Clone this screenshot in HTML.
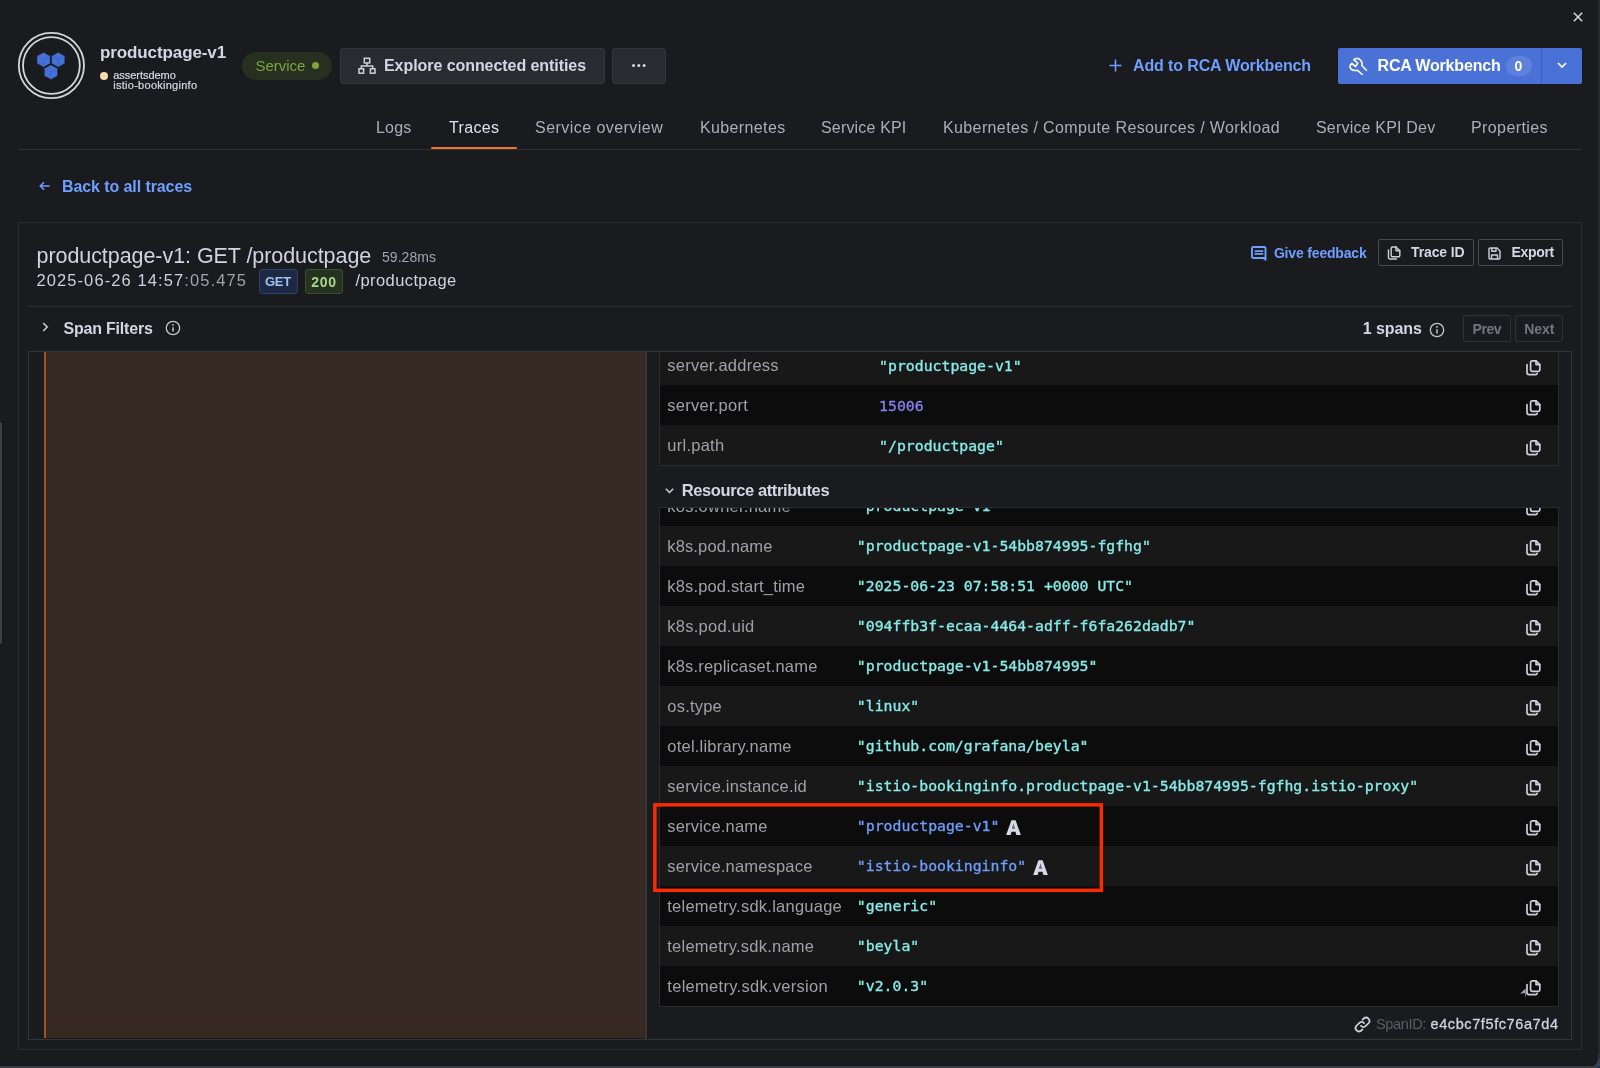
<!DOCTYPE html>
<html lang="en">
<head>
<meta charset="utf-8">
<title>productpage-v1 - Traces</title>
<style>
*{box-sizing:border-box;margin:0;padding:0}
html,body{width:1600px;height:1068px;overflow:hidden;background:#1a1b1f;}
body{position:relative;font-family:"Liberation Sans",sans-serif;color:#ccccdc;font-size:16px;}
.abs{position:absolute;white-space:nowrap;}
.t{position:absolute;white-space:nowrap;line-height:20px;}
.mono{font-family:"DejaVu Sans Mono","Liberation Mono",monospace;}
svg{position:absolute;overflow:visible}
/* header */
#tabline{left:18px;top:149px;width:1564px;height:1px;background:#2f3036;}
.tab{color:#acadb9;font-size:16px;top:118px;}
.btn{position:absolute;background:#2a2b30;border:1px solid #36373d;border-radius:3px;}
/* panel */
#panel{left:18px;top:222px;width:1564px;height:828px;border:1px solid #2b2c31;border-radius:2px;}
#inner{left:28px;top:351px;width:1544px;height:689px;border:1px solid #34353b;}
#brown{left:45px;top:352px;width:600px;height:686px;background:#362921;}
#oline{left:44px;top:352px;width:2px;height:686px;background:#9a5226;}
.row{position:absolute;left:0;width:898.5px;height:40px;}
.row.l{background:#181818}
.row.d{background:#0c0c0c}
.k{position:absolute;left:7.5px;top:10px;line-height:20px;color:#a0a0a7;font-size:16.5px;letter-spacing:.25px;white-space:nowrap}
.v{position:absolute;top:10.6px;margin-left:-1.2px;-webkit-text-stroke:0.32px;line-height:20px;font-size:14.8px;color:#86ecea;white-space:nowrap}
.cpi{position:absolute;left:866.6px;top:14.8px}
.ai{position:relative;display:inline-block;vertical-align:-4.1px;margin-left:6.6px}
.tbl{position:absolute;left:658.8px;width:900.5px;border:1px solid #2a2b2f;overflow:hidden}
</style>
<style id="ls">
#title{letter-spacing:-0.109px}
#explore{letter-spacing:-0.062px}
#addrca{letter-spacing:-0.122px}
#rca{letter-spacing:-0.173px}
#tab1{letter-spacing:0.224px}
#tab2{letter-spacing:0.331px}
#tab3{letter-spacing:0.454px}
#tab4{letter-spacing:0.376px}
#tab5{letter-spacing:0.173px}
#tab6{letter-spacing:0.377px}
#tab7{letter-spacing:0.194px}
#tab8{letter-spacing:0.408px}
#back{letter-spacing:-0.090px}
#ptitle{letter-spacing:-0.061px}
#pdur{letter-spacing:0.042px}
#pdate{letter-spacing:1.102px}
#bget{letter-spacing:-0.245px}
#b200{letter-spacing:0.714px}
#ppath{letter-spacing:0.406px}
#fb{letter-spacing:-0.172px}
#tid{letter-spacing:-0.148px}
#exp{letter-spacing:-0.307px}
#sf{letter-spacing:-0.207px}
#nsp{letter-spacing:-0.099px}
#prev{letter-spacing:-0.465px}
#next{letter-spacing:-0.040px}
#a0{letter-spacing:0.231px}
#r1{letter-spacing:0.129px}
#r2{letter-spacing:0.160px}
#r3{letter-spacing:0.254px}
#r4{letter-spacing:0.182px}
#r5{letter-spacing:0.214px}
#r6{letter-spacing:0.218px}
#r7{letter-spacing:0.209px}
#r8{letter-spacing:0.173px}
#r9{letter-spacing:0.179px}
#r10{letter-spacing:0.242px}
#r11{letter-spacing:0.233px}
#r12{letter-spacing:0.287px}
#ra{letter-spacing:-0.393px}
#sub1{letter-spacing:-0.044px}
#sub2{letter-spacing:0.265px}
#svc{letter-spacing:-0.033px}
#sid1{letter-spacing:-0.329px}
#sid2{letter-spacing:0.599px}
</style>
</head>
<body><div id="wrap" style="position:absolute;left:0;top:0;width:1600px;height:1068px;will-change:transform;">
<!-- HEADER -->
<div class="abs" id="tabline"></div>
<div id="hdr">
<!-- avatar -->
<svg style="left:17px;top:31px" width="70" height="70" viewBox="0 0 70 70">
  <circle cx="34.4" cy="34.5" r="32.6" fill="none" stroke="#d6d6d6" stroke-width="1.8"/>
  <circle cx="34.4" cy="34.5" r="28.4" fill="none" stroke="#d6d6d6" stroke-width="1.8"/>
  <g fill="#4571d8" stroke="#1a1b1f" stroke-width="0.6">
    <path d="M26.6 21.3 L33.3 25 L33.3 32.5 L26.6 36.2 L19.9 32.5 L19.9 25 Z"/>
    <path d="M41.2 21.3 L47.9 25 L47.9 32.5 L41.2 36.2 L34.5 32.5 L34.5 25 Z"/>
    <path d="M33.9 33.7 L40.6 37.4 L40.6 44.9 L33.9 48.6 L27.2 44.9 L27.2 37.4 Z"/>
  </g>
  <g fill="none" stroke="#3a62c0" stroke-width="0.7">
    <path d="M19.9 25 L26.6 28.7 L33.3 25 M26.6 28.7 L26.6 36.2"/>
    <path d="M34.5 25 L41.2 28.7 L47.9 25 M41.2 28.7 L41.2 36.2"/>
    <path d="M27.2 37.4 L33.9 41.1 L40.6 37.4 M33.9 41.1 L33.9 48.6"/>
  </g>
</svg>
<div class="t" id="title" style="left:100px;top:43.2px;font-size:17px;font-weight:bold;color:#d5d5e3;">productpage-v1</div>
<div class="abs" style="left:100px;top:71.5px;width:8px;height:8px;border-radius:50%;background:#f8d8ae;"></div>
<div class="t" id="sub1" style="left:113.3px;top:70.3px;font-size:11px;line-height:10px;color:#dadae6;-webkit-text-stroke:0.2px;">assertsdemo</div>
<div class="t" id="sub2" style="left:113.3px;top:80.3px;font-size:11px;line-height:10px;color:#dadae6;-webkit-text-stroke:0.2px;">istio-bookinginfo</div>
<!-- service pill -->
<div class="abs" style="left:242px;top:52px;width:90px;height:28px;border-radius:14px;background:#272f20;"></div>
<div class="t" id="svc" style="left:255.5px;top:55.5px;font-size:15px;color:#7fa43a;">Service</div>
<div class="abs" style="left:312px;top:62px;width:7px;height:7px;border-radius:50%;background:#7fa43a;"></div>
<!-- explore button -->
<div class="btn" style="left:340px;top:47.5px;width:265px;height:36px;"></div>
<svg style="left:358px;top:57px" width="18" height="18" viewBox="0 0 18 18" fill="none" stroke="#d0d0dc" stroke-width="1.5">
  <rect x="6.3" y="1.3" width="5.4" height="4.6"/>
  <rect x="1" y="11.8" width="4.6" height="4.4"/>
  <rect x="12.4" y="11.8" width="4.6" height="4.4"/>
  <path d="M9 6 V9 M3.3 11.8 V9 H14.7 V11.8"/>
</svg>
<div class="t" id="explore" style="left:384px;top:56px;font-size:16px;font-weight:bold;color:#d5d5e3;">Explore connected entities</div>
<div class="btn" style="left:612px;top:47.5px;width:54px;height:36px;"></div>
<div class="abs" style="left:632px;top:64px;width:3.2px;height:3.2px;border-radius:50%;background:#d5d5e3;box-shadow:5.3px 0 0 #d5d5e3,10.6px 0 0 #d5d5e3;"></div>
<!-- add to rca -->
<svg style="left:1109px;top:59px" width="13" height="13" viewBox="0 0 13 13" stroke="#6e9fff" stroke-width="1.6" fill="none"><path d="M6.5 0.5 V12.5 M0.5 6.5 H12.5"/></svg>
<div class="t" id="addrca" style="left:1133px;top:56px;font-size:16px;font-weight:bold;color:#6e9fff;">Add to RCA Workbench</div>
<!-- rca button -->
<div class="abs" style="left:1338px;top:47.5px;width:244px;height:36px;border-radius:2px;background:#4a72d6;"></div>
<div class="abs" style="left:1541px;top:47.5px;width:1px;height:36px;background:#3c60ba;"></div>
<svg style="left:1349.3px;top:56.5px" width="19" height="19" viewBox="0 0 19 19" fill="none" stroke="#fff" stroke-width="1.6" stroke-linecap="round" stroke-linejoin="round">
  <path d="M17.4 13.3 L13 8.7 C13.4 6.6 12.9 4.5 11.4 3 C9.6 1.2 6.8 1 4.7 2.7 L8.7 6 L6.6 9.5 L2.8 6.5 C0.8 8 0.4 10.4 1.9 11.9 C3.5 13.6 6 13.7 8.2 13.2 L13.3 17.5"/>
</svg>
<div class="t" id="rca" style="left:1377.5px;top:56px;font-size:16px;font-weight:bold;color:#fff;">RCA Workbench</div>
<div class="abs" style="left:1506px;top:56px;width:26px;height:20px;border-radius:10px;background:#5d81dc;"></div>
<div class="t" style="left:1514.5px;top:56px;font-size:14px;font-weight:bold;color:#fff;">0</div>
<svg style="left:1557px;top:62px" width="10" height="7" viewBox="0 0 10 7" fill="none" stroke="#fff" stroke-width="1.7"><path d="M1 1 L5 5 L9 1"/></svg>
<!-- close -->
<svg style="left:1573px;top:12px" width="10" height="10" viewBox="0 0 10 10" fill="none" stroke="#d8d8e0" stroke-width="1.5"><path d="M0.8 0.8 L9.2 9.2 M9.2 0.8 L0.8 9.2"/></svg>
<!-- tabs -->
<div class="t tab" id="tab1" style="left:376px;">Logs</div>
<div class="t tab" id="tab2" style="left:449px;color:#e0e0ec;">Traces</div>
<div class="t tab" id="tab3" style="left:535px;">Service overview</div>
<div class="t tab" id="tab4" style="left:700px;">Kubernetes</div>
<div class="t tab" id="tab5" style="left:821px;">Service KPI</div>
<div class="t tab" id="tab6" style="left:943px;">Kubernetes / Compute Resources / Workload</div>
<div class="t tab" id="tab7" style="left:1316px;">Service KPI Dev</div>
<div class="t tab" id="tab8" style="left:1471px;">Properties</div>
<div class="abs" style="left:431px;top:147px;width:86px;height:2px;background:#f0743a;border-radius:1px;"></div>
<!-- back -->
<svg style="left:38.5px;top:181.3px" width="11" height="10" viewBox="0 0 11 10" fill="none" stroke="#6e9fff" stroke-width="1.5"><path d="M10.5 5 H1.5 M5 1.2 L1.3 5 L5 8.8"/></svg>
<div class="t" id="back" style="left:62px;top:176.8px;font-size:16px;font-weight:bold;color:#6e9fff;">Back to all traces</div>
<!-- left scroll handle -->
<div class="abs" style="left:0;top:422px;width:2px;height:222px;background:#3e3f45;border-radius:0 2px 2px 0;"></div>
<div class="abs" style="left:0;top:1066px;width:1600px;height:2px;background:#3a3b40;"></div>
</div>
<!-- PANEL -->
<div class="abs" id="panel"></div>
<div id="phead">
<div class="t" id="ptitle" style="left:36.5px;top:243.5px;font-size:21.5px;line-height:24px;color:#d2d2e0;">productpage-v1: GET /productpage</div>
<div class="t" id="pdur" style="left:382px;top:247px;font-size:14px;color:#a4a5b0;">59.28ms</div>
<div class="t" id="pdate" style="left:36.4px;top:270px;font-size:16.5px;color:#cfcfdc;">2025-06-26 14:57<span style="color:#a0a1ab">:05.475</span></div>
<div class="abs" style="left:259px;top:269px;width:39px;height:25px;border-radius:3px;background:#1d2942;border:1px solid #2c426e;"></div>
<div class="t" id="bget" style="left:265px;top:271.5px;font-size:13px;font-weight:bold;color:#a3c0f5;">GET</div>
<div class="abs" style="left:305px;top:269px;width:38px;height:25px;border-radius:3px;background:#25321f;border:1px solid #39502e;"></div>
<div class="t" id="b200" style="left:311.3px;top:271.5px;font-size:14px;font-weight:bold;color:#a6d78a;">200</div>
<div class="t" id="ppath" style="left:355.5px;top:270px;font-size:16.5px;color:#d2d2e0;">/productpage</div>
<div class="abs" style="left:28px;top:306px;width:1544px;height:1px;background:#2c2d32;"></div>
<!-- right buttons -->
<svg style="left:1250.5px;top:246px" width="16" height="16" viewBox="0 0 16 16" fill="none" stroke="#6e9fff" stroke-width="1.9" stroke-linejoin="round">
  <path d="M2.2 1 H13.3 A1.2 1.2 0 0 1 14.5 2.2 V12 H2.2 A1.2 1.2 0 0 1 1 10.8 V2.2 A1.2 1.2 0 0 1 2.2 1 Z"/>
  <path d="M11.2 12 L14.9 14.4 V12 Z" fill="#6e9fff" stroke-width="1"/>
  <path d="M3.6 5.1 H12.2 M3.6 7.9 H12.2" stroke-width="1.6"/>
</svg>
<div class="t" id="fb" style="left:1273.9px;top:242.8px;font-size:14px;font-weight:bold;color:#6e9fff;">Give feedback</div>
<div class="abs" style="left:1378px;top:239.3px;width:96px;height:27px;border:1px solid #494a51;border-radius:2px;"></div>
<svg class="cp" style="left:1387.2px;top:246px" width="14" height="14" viewBox="0 0 14 14" fill="none" stroke="#d0d0dc" stroke-width="1.4" stroke-linejoin="round" stroke-linecap="round">
  <path d="M4.2 2.2 A1.2 1.2 0 0 1 5.4 1 H9 L12.8 4.8 V9.6 A1.2 1.2 0 0 1 11.6 10.8 H5.4 A1.2 1.2 0 0 1 4.2 9.6 Z"/><path d="M9 1 V4.8 H12.8"/><path d="M1.5 4 V11.6 A1.4 1.4 0 0 0 2.9 13 H9.5"/>
</svg>
<div class="t" id="tid" style="left:1411.1px;top:241.5px;font-size:14px;font-weight:bold;color:#d5d5e3;">Trace ID</div>
<div class="abs" style="left:1478px;top:239.3px;width:85px;height:27px;border:1px solid #494a51;border-radius:2px;"></div>
<svg style="left:1488.2px;top:246.5px" width="13" height="13" viewBox="0 0 13 13" fill="none" stroke="#d0d0dc" stroke-width="1.4" stroke-linejoin="round">
  <path d="M1 2 A1 1 0 0 1 2 1 H9 L12 4 V11 A1 1 0 0 1 11 12 H2 A1 1 0 0 1 1 11 Z"/><path d="M3.8 1 V4.2 H8 V1 M3.5 12 V8 H9.5 V12"/>
</svg>
<div class="t" id="exp" style="left:1511.4px;top:241.5px;font-size:14px;font-weight:bold;color:#d5d5e3;">Export</div>
<!-- span filters row -->
<svg style="left:42px;top:322px" width="7" height="10" viewBox="0 0 7 10" fill="none" stroke="#d0d0dc" stroke-width="1.5"><path d="M1.2 1 L5.2 5 L1.2 9"/></svg>
<div class="t" id="sf" style="left:63.5px;top:318.8px;font-size:16px;font-weight:bold;color:#d5d5e3;">Span Filters</div>
<svg style="left:164.8px;top:320px" width="16" height="16" viewBox="0 0 16 16" fill="none" stroke="#c4c4cf" stroke-width="1.3"><circle cx="8" cy="8" r="6.7"/><path d="M8 7.2 V11.4" stroke-width="1.5"/><circle cx="8" cy="4.9" r="0.9" fill="#c4c4cf" stroke="none"/></svg>
<div class="t" id="nsp" style="left:1362.8px;top:319.2px;font-size:16px;font-weight:bold;color:#d5d5e3;">1 spans</div>
<svg style="left:1428.6px;top:321.7px" width="16" height="16" viewBox="0 0 16 16" fill="none" stroke="#c4c4cf" stroke-width="1.3"><circle cx="8" cy="8" r="6.7"/><path d="M8 7.2 V11.4" stroke-width="1.5"/><circle cx="8" cy="4.9" r="0.9" fill="#c4c4cf" stroke="none"/></svg>
<div class="abs" style="left:1463px;top:315.2px;width:47.5px;height:27px;border:1px solid #303137;border-radius:2px;"></div>
<div class="t" id="prev" style="left:1472.6px;top:318.5px;font-size:14px;font-weight:bold;color:#74757f;">Prev</div>
<div class="abs" style="left:1515px;top:315.2px;width:48px;height:27px;border:1px solid #303137;border-radius:2px;"></div>
<div class="t" id="next" style="left:1524.3px;top:318.5px;font-size:14px;font-weight:bold;color:#74757f;">Next</div>
</div>
<div class="abs" id="brown"></div>
<div class="abs" id="oline"></div>
<div id="detail">
<div class="abs" style="left:646px;top:352px;width:925.5px;height:687px;background:#1a1b1f;"></div>
<div class="abs" style="left:645px;top:352px;width:2px;height:687px;background:#383736;"></div>
<div class="tbl" style="top:351px;height:115.2px;border-top:none">
<div class="row l" style="top:-6px"><span class="k" id="a0">server.address</span><span class="v mono" style="left:220.5px">&quot;productpage-v1&quot;</span><svg class="cpi" width="15" height="16" viewBox="0 0 15 16"><g fill="none" stroke="#cdcddb" stroke-width="1.7" stroke-linejoin="round" stroke-linecap="round"><path d="M4.6 2.4 A1.6 1.6 0 0 1 6.2 0.8 H10 L13.8 4.6 V9.8 A1.6 1.6 0 0 1 12.2 11.4 H6.2 A1.6 1.6 0 0 1 4.6 9.8 Z"/>
<path d="M10 0.8 V4.6 H13.8"/>
<path d="M1 4.6 V12.6 A2 2 0 0 0 3 14.6 H9.6 A1.8 1.8 0 0 0 11.2 13.4"/></g></svg></div>
<div class="row d" style="top:34px"><span class="k" id="a1">server.port</span><span class="v mono" style="left:220.5px"><span style="color:#8b80f0">15006</span></span><svg class="cpi" width="15" height="16" viewBox="0 0 15 16"><g fill="none" stroke="#cdcddb" stroke-width="1.7" stroke-linejoin="round" stroke-linecap="round"><path d="M4.6 2.4 A1.6 1.6 0 0 1 6.2 0.8 H10 L13.8 4.6 V9.8 A1.6 1.6 0 0 1 12.2 11.4 H6.2 A1.6 1.6 0 0 1 4.6 9.8 Z"/>
<path d="M10 0.8 V4.6 H13.8"/>
<path d="M1 4.6 V12.6 A2 2 0 0 0 3 14.6 H9.6 A1.8 1.8 0 0 0 11.2 13.4"/></g></svg></div>
<div class="row l" style="top:74px"><span class="k" id="a2">url.path</span><span class="v mono" style="left:220.5px">&quot;/productpage&quot;</span><svg class="cpi" width="15" height="16" viewBox="0 0 15 16"><g fill="none" stroke="#cdcddb" stroke-width="1.7" stroke-linejoin="round" stroke-linecap="round"><path d="M4.6 2.4 A1.6 1.6 0 0 1 6.2 0.8 H10 L13.8 4.6 V9.8 A1.6 1.6 0 0 1 12.2 11.4 H6.2 A1.6 1.6 0 0 1 4.6 9.8 Z"/>
<path d="M10 0.8 V4.6 H13.8"/>
<path d="M1 4.6 V12.6 A2 2 0 0 0 3 14.6 H9.6 A1.8 1.8 0 0 0 11.2 13.4"/></g></svg></div>
</div>
<svg style="left:665px;top:487.5px" width="9" height="6" viewBox="0 0 9 6" fill="none" stroke="#d0d0dc" stroke-width="1.5"><path d="M0.8 0.8 L4.5 4.5 L8.2 0.8"/></svg>
<div class="t" id="ra" style="left:681.7px;top:480px;font-size:16.5px;font-weight:bold;color:#d5d5e3;">Resource attributes</div>
<div class="tbl" style="top:507px;height:499.5px;">
<div class="row d" style="top:-22.40px"><span class="k" id="r0">k8s.owner.name</span><span class="v mono" style="left:198.25px">&quot;productpage-v1&quot;</span><svg class="cpi" width="15" height="16" viewBox="0 0 15 16"><g fill="none" stroke="#cdcddb" stroke-width="1.7" stroke-linejoin="round" stroke-linecap="round"><path d="M4.6 2.4 A1.6 1.6 0 0 1 6.2 0.8 H10 L13.8 4.6 V9.8 A1.6 1.6 0 0 1 12.2 11.4 H6.2 A1.6 1.6 0 0 1 4.6 9.8 Z"/>
<path d="M10 0.8 V4.6 H13.8"/>
<path d="M1 4.6 V12.6 A2 2 0 0 0 3 14.6 H9.6 A1.8 1.8 0 0 0 11.2 13.4"/></g></svg></div>
<div class="row l" style="top:17.60px"><span class="k" id="r1">k8s.pod.name</span><span class="v mono" style="left:198.25px">&quot;productpage-v1-54bb874995-fgfhg&quot;</span><svg class="cpi" width="15" height="16" viewBox="0 0 15 16"><g fill="none" stroke="#cdcddb" stroke-width="1.7" stroke-linejoin="round" stroke-linecap="round"><path d="M4.6 2.4 A1.6 1.6 0 0 1 6.2 0.8 H10 L13.8 4.6 V9.8 A1.6 1.6 0 0 1 12.2 11.4 H6.2 A1.6 1.6 0 0 1 4.6 9.8 Z"/>
<path d="M10 0.8 V4.6 H13.8"/>
<path d="M1 4.6 V12.6 A2 2 0 0 0 3 14.6 H9.6 A1.8 1.8 0 0 0 11.2 13.4"/></g></svg></div>
<div class="row d" style="top:57.60px"><span class="k" id="r2">k8s.pod.start_time</span><span class="v mono" style="left:198.25px">&quot;2025-06-23 07:58:51 +0000 UTC&quot;</span><svg class="cpi" width="15" height="16" viewBox="0 0 15 16"><g fill="none" stroke="#cdcddb" stroke-width="1.7" stroke-linejoin="round" stroke-linecap="round"><path d="M4.6 2.4 A1.6 1.6 0 0 1 6.2 0.8 H10 L13.8 4.6 V9.8 A1.6 1.6 0 0 1 12.2 11.4 H6.2 A1.6 1.6 0 0 1 4.6 9.8 Z"/>
<path d="M10 0.8 V4.6 H13.8"/>
<path d="M1 4.6 V12.6 A2 2 0 0 0 3 14.6 H9.6 A1.8 1.8 0 0 0 11.2 13.4"/></g></svg></div>
<div class="row l" style="top:97.60px"><span class="k" id="r3">k8s.pod.uid</span><span class="v mono" style="left:198.25px">&quot;094ffb3f-ecaa-4464-adff-f6fa262dadb7&quot;</span><svg class="cpi" width="15" height="16" viewBox="0 0 15 16"><g fill="none" stroke="#cdcddb" stroke-width="1.7" stroke-linejoin="round" stroke-linecap="round"><path d="M4.6 2.4 A1.6 1.6 0 0 1 6.2 0.8 H10 L13.8 4.6 V9.8 A1.6 1.6 0 0 1 12.2 11.4 H6.2 A1.6 1.6 0 0 1 4.6 9.8 Z"/>
<path d="M10 0.8 V4.6 H13.8"/>
<path d="M1 4.6 V12.6 A2 2 0 0 0 3 14.6 H9.6 A1.8 1.8 0 0 0 11.2 13.4"/></g></svg></div>
<div class="row d" style="top:137.60px"><span class="k" id="r4">k8s.replicaset.name</span><span class="v mono" style="left:198.25px">&quot;productpage-v1-54bb874995&quot;</span><svg class="cpi" width="15" height="16" viewBox="0 0 15 16"><g fill="none" stroke="#cdcddb" stroke-width="1.7" stroke-linejoin="round" stroke-linecap="round"><path d="M4.6 2.4 A1.6 1.6 0 0 1 6.2 0.8 H10 L13.8 4.6 V9.8 A1.6 1.6 0 0 1 12.2 11.4 H6.2 A1.6 1.6 0 0 1 4.6 9.8 Z"/>
<path d="M10 0.8 V4.6 H13.8"/>
<path d="M1 4.6 V12.6 A2 2 0 0 0 3 14.6 H9.6 A1.8 1.8 0 0 0 11.2 13.4"/></g></svg></div>
<div class="row l" style="top:177.60px"><span class="k" id="r5">os.type</span><span class="v mono" style="left:198.25px">&quot;linux&quot;</span><svg class="cpi" width="15" height="16" viewBox="0 0 15 16"><g fill="none" stroke="#cdcddb" stroke-width="1.7" stroke-linejoin="round" stroke-linecap="round"><path d="M4.6 2.4 A1.6 1.6 0 0 1 6.2 0.8 H10 L13.8 4.6 V9.8 A1.6 1.6 0 0 1 12.2 11.4 H6.2 A1.6 1.6 0 0 1 4.6 9.8 Z"/>
<path d="M10 0.8 V4.6 H13.8"/>
<path d="M1 4.6 V12.6 A2 2 0 0 0 3 14.6 H9.6 A1.8 1.8 0 0 0 11.2 13.4"/></g></svg></div>
<div class="row d" style="top:217.60px"><span class="k" id="r6">otel.library.name</span><span class="v mono" style="left:198.25px">&quot;github.com/grafana/beyla&quot;</span><svg class="cpi" width="15" height="16" viewBox="0 0 15 16"><g fill="none" stroke="#cdcddb" stroke-width="1.7" stroke-linejoin="round" stroke-linecap="round"><path d="M4.6 2.4 A1.6 1.6 0 0 1 6.2 0.8 H10 L13.8 4.6 V9.8 A1.6 1.6 0 0 1 12.2 11.4 H6.2 A1.6 1.6 0 0 1 4.6 9.8 Z"/>
<path d="M10 0.8 V4.6 H13.8"/>
<path d="M1 4.6 V12.6 A2 2 0 0 0 3 14.6 H9.6 A1.8 1.8 0 0 0 11.2 13.4"/></g></svg></div>
<div class="row l" style="top:257.60px"><span class="k" id="r7">service.instance.id</span><span class="v mono" style="left:198.25px">&quot;istio-bookinginfo.productpage-v1-54bb874995-fgfhg.istio-proxy&quot;</span><svg class="cpi" width="15" height="16" viewBox="0 0 15 16"><g fill="none" stroke="#cdcddb" stroke-width="1.7" stroke-linejoin="round" stroke-linecap="round"><path d="M4.6 2.4 A1.6 1.6 0 0 1 6.2 0.8 H10 L13.8 4.6 V9.8 A1.6 1.6 0 0 1 12.2 11.4 H6.2 A1.6 1.6 0 0 1 4.6 9.8 Z"/>
<path d="M10 0.8 V4.6 H13.8"/>
<path d="M1 4.6 V12.6 A2 2 0 0 0 3 14.6 H9.6 A1.8 1.8 0 0 0 11.2 13.4"/></g></svg></div>
<div class="row d" style="top:297.60px"><span class="k" id="r8">service.name</span><span class="v mono" style="left:198.25px"><span style="color:#6e9fff">&quot;productpage-v1&quot;</span><svg class="ai" width="15" height="15.5" viewBox="0 0 15 15.8"><g><path d="M5.4 0.3 H9.6 L15 15.3 H10.4 L9.5 12 H5.5 L4.6 15.3 H0 Z" fill="#d9d9e6"/><path d="M7.5 3.6 L9.1 9.2 H5.9 Z" fill="#9b9ba8"/><path d="M7.5 3.8 V9 M6.6 6.3 V9 M8.4 6.3 V9" stroke="#4a4a55" stroke-width="0.5"/></g></svg></span><svg class="cpi" width="15" height="16" viewBox="0 0 15 16"><g fill="none" stroke="#cdcddb" stroke-width="1.7" stroke-linejoin="round" stroke-linecap="round"><path d="M4.6 2.4 A1.6 1.6 0 0 1 6.2 0.8 H10 L13.8 4.6 V9.8 A1.6 1.6 0 0 1 12.2 11.4 H6.2 A1.6 1.6 0 0 1 4.6 9.8 Z"/>
<path d="M10 0.8 V4.6 H13.8"/>
<path d="M1 4.6 V12.6 A2 2 0 0 0 3 14.6 H9.6 A1.8 1.8 0 0 0 11.2 13.4"/></g></svg></div>
<div class="row l" style="top:337.60px"><span class="k" id="r9">service.namespace</span><span class="v mono" style="left:198.25px"><span style="color:#6e9fff">&quot;istio-bookinginfo&quot;</span><svg class="ai" width="15" height="15.5" viewBox="0 0 15 15.8"><g><path d="M5.4 0.3 H9.6 L15 15.3 H10.4 L9.5 12 H5.5 L4.6 15.3 H0 Z" fill="#d9d9e6"/><path d="M7.5 3.6 L9.1 9.2 H5.9 Z" fill="#9b9ba8"/><path d="M7.5 3.8 V9 M6.6 6.3 V9 M8.4 6.3 V9" stroke="#4a4a55" stroke-width="0.5"/></g></svg></span><svg class="cpi" width="15" height="16" viewBox="0 0 15 16"><g fill="none" stroke="#cdcddb" stroke-width="1.7" stroke-linejoin="round" stroke-linecap="round"><path d="M4.6 2.4 A1.6 1.6 0 0 1 6.2 0.8 H10 L13.8 4.6 V9.8 A1.6 1.6 0 0 1 12.2 11.4 H6.2 A1.6 1.6 0 0 1 4.6 9.8 Z"/>
<path d="M10 0.8 V4.6 H13.8"/>
<path d="M1 4.6 V12.6 A2 2 0 0 0 3 14.6 H9.6 A1.8 1.8 0 0 0 11.2 13.4"/></g></svg></div>
<div class="row d" style="top:377.60px"><span class="k" id="r10">telemetry.sdk.language</span><span class="v mono" style="left:198.25px">&quot;generic&quot;</span><svg class="cpi" width="15" height="16" viewBox="0 0 15 16"><g fill="none" stroke="#cdcddb" stroke-width="1.7" stroke-linejoin="round" stroke-linecap="round"><path d="M4.6 2.4 A1.6 1.6 0 0 1 6.2 0.8 H10 L13.8 4.6 V9.8 A1.6 1.6 0 0 1 12.2 11.4 H6.2 A1.6 1.6 0 0 1 4.6 9.8 Z"/>
<path d="M10 0.8 V4.6 H13.8"/>
<path d="M1 4.6 V12.6 A2 2 0 0 0 3 14.6 H9.6 A1.8 1.8 0 0 0 11.2 13.4"/></g></svg></div>
<div class="row l" style="top:417.60px"><span class="k" id="r11">telemetry.sdk.name</span><span class="v mono" style="left:198.25px">&quot;beyla&quot;</span><svg class="cpi" width="15" height="16" viewBox="0 0 15 16"><g fill="none" stroke="#cdcddb" stroke-width="1.7" stroke-linejoin="round" stroke-linecap="round"><path d="M4.6 2.4 A1.6 1.6 0 0 1 6.2 0.8 H10 L13.8 4.6 V9.8 A1.6 1.6 0 0 1 12.2 11.4 H6.2 A1.6 1.6 0 0 1 4.6 9.8 Z"/>
<path d="M10 0.8 V4.6 H13.8"/>
<path d="M1 4.6 V12.6 A2 2 0 0 0 3 14.6 H9.6 A1.8 1.8 0 0 0 11.2 13.4"/></g></svg></div>
<div class="row d" style="top:457.60px"><span class="k" id="r12">telemetry.sdk.version</span><span class="v mono" style="left:198.25px">&quot;v2.0.3&quot;</span><svg class="cpi" width="15" height="16" viewBox="0 0 15 16"><g fill="none" stroke="#cdcddb" stroke-width="1.7" stroke-linejoin="round" stroke-linecap="round"><path d="M4.6 2.4 A1.6 1.6 0 0 1 6.2 0.8 H10 L13.8 4.6 V9.8 A1.6 1.6 0 0 1 12.2 11.4 H6.2 A1.6 1.6 0 0 1 4.6 9.8 Z"/>
<path d="M10 0.8 V4.6 H13.8"/>
<path d="M1 4.6 V12.6 A2 2 0 0 0 3 14.6 H9.6 A1.8 1.8 0 0 0 11.2 13.4"/></g></svg></div>
</div>
<svg style="left:653px;top:802.9px" width="451" height="90" viewBox="0 0 451 90"><rect x="1.85" y="1.85" width="446.5" height="85.5" fill="none" stroke="#fa2a02" stroke-width="3.5"/></svg>
<svg style="left:1354px;top:1015.5px" width="17" height="17" viewBox="0 0 15 15" fill="none" stroke="#cdcddb" stroke-width="1.6" stroke-linecap="round"><path d="M6.2 8.8 A3 3 0 0 0 10.4 8.8 L13 6.2 A3 3 0 0 0 8.8 2 L7.6 3.2"/><path d="M8.8 6.2 A3 3 0 0 0 4.6 6.2 L2 8.8 A3 3 0 0 0 6.2 13 L7.4 11.8"/></svg>
<div class="t" id="sid1" style="left:1375.9px;top:1014px;font-size:14.5px;color:#5c5d66;">SpanID:</div>
<div class="t" id="sid2" style="left:1430.5px;top:1014px;font-size:14.5px;-webkit-text-stroke:0.3px;color:#d2d2e0;">e4cbc7f5fc76a7d4</div>
<!-- cursor -->
<svg style="left:1519px;top:987px" width="9" height="13" viewBox="0 0 9 13"><path d="M1.1 6.8 L6.6 1.4 L7.2 12 L5.9 6 Z" fill="#a4a4ae"/></svg>
</div>
<div class="abs" style="left:1598px;top:0;width:2px;height:1068px;background:#27282d;"></div>
<svg style="left:1586px;top:1054px" width="14" height="14" viewBox="0 0 14 14"><path d="M12.4 5 A8 8 0 0 1 4.4 12.8 H14 V5 Z" fill="#30465e"/><path d="M0 12.9 H4.4 A8.2 8.2 0 0 0 12.6 4.8 V0" fill="none" stroke="#3c3d44" stroke-width="1.1"/></svg>
<div class="abs" id="inner"></div>
</div></body>
</html>
